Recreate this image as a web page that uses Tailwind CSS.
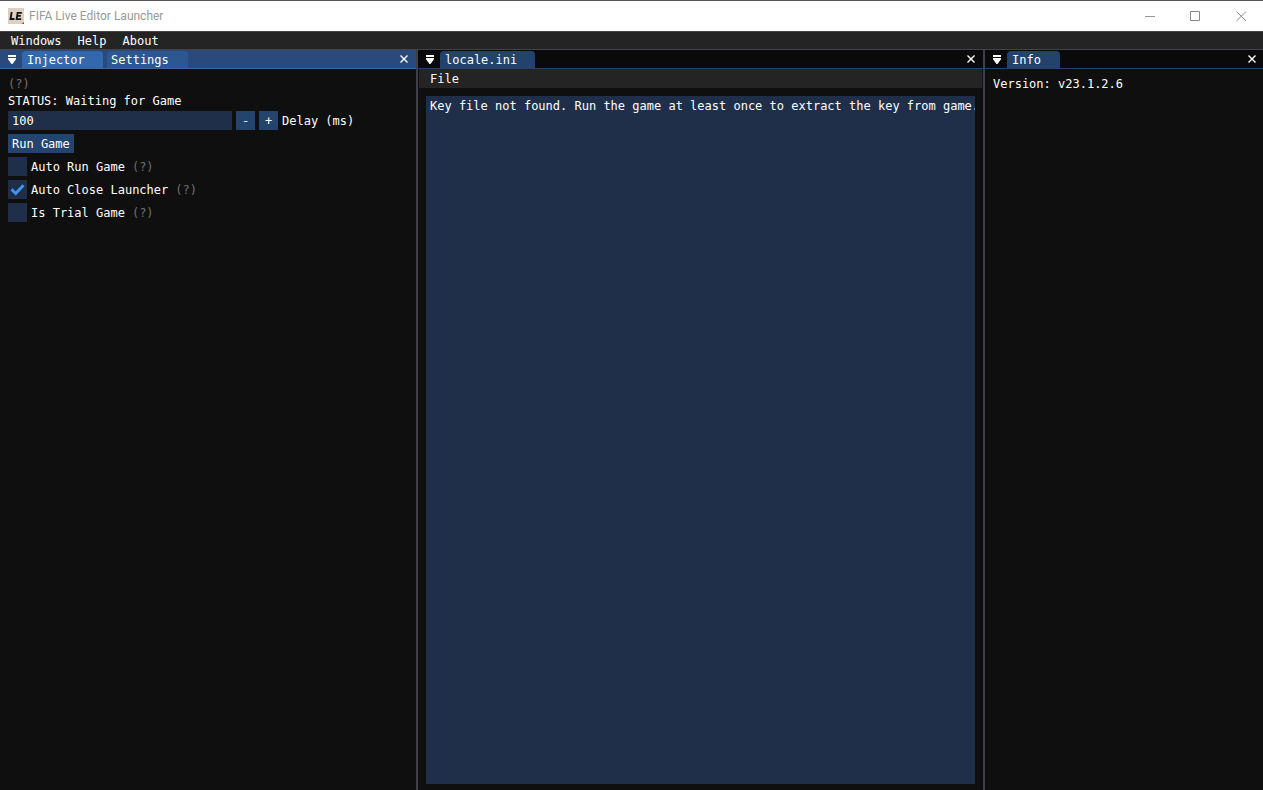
<!DOCTYPE html>
<html lang="en">
<head>
<meta charset="utf-8">
<meta name="viewport" content="width=device-width, initial-scale=1">
<title>FIFA Live Editor Launcher</title>
<script src="https://cdn.jsdelivr.net/npm/@tailwindcss/browser@4"></script>
</head>
<body class="h-screen flex flex-col overflow-hidden bg-[#0f0f0f] text-white font-['DejaVu_Sans_Mono',monospace] text-[12px] leading-[13px]">
  <header class="h-[31px] shrink-0 flex items-center bg-white border-t border-[#555] font-[Roboto,sans-serif] text-[#999]">
    <svg class="ml-2 w-4 h-4" viewBox="0 0 16 16" aria-hidden="true">
      <rect width="16" height="16" fill="#ddd0c0"/>
      <path d="M3.700 4 2.500 11H6.500M13.800 4.900H9.600L8.600 11.100h4.600M9 7.900h3.800" fill="none" stroke="#111" stroke-width="1.8"/>
      <path d="M13.500 16l2.500-2v2z" fill="#6b5b4b"/>
    </svg>
    <h1 class="ml-[5px] flex-1 leading-4">FIFA Live Editor Launcher</h1>
    <button class="w-[45px] h-full pl-0.5 flex items-center justify-center" aria-label="Minimize">
      <svg class="w-[11px] h-[11px]" viewBox="0 0 11 11" fill="none" stroke="#999"><path d="M0 5.5h10"/></svg>
    </button>
    <button class="w-[46px] h-full pl-px flex items-center justify-center" aria-label="Maximize">
      <svg class="w-[11px] h-[11px]" viewBox="0 0 11 11" fill="none" stroke="#888"><path d="M.5.5h9v9h-9z"/></svg>
    </button>
    <button class="w-[45px] h-full pl-0.5 flex items-center justify-center" aria-label="Close window">
      <svg class="w-[11px] h-[11px]" viewBox="0 0 11 11" fill="none" stroke="#888"><path d="M.5.5l9.500 9.500M10 .5l-9.500 9.500"/></svg>
    </button>
  </header>

  <nav class="h-[19px] shrink-0 flex items-center gap-4 pt-0.5 pl-[11px] bg-[#242424] border-y border-[#43434b]" aria-label="Main menu">
    <button>Windows</button>
    <button>Help</button>
    <button>About</button>
  </nav>

  <main class="flex-1 min-h-0 flex">
    <section class="w-[418px] shrink-0 flex flex-col border-r-2 border-[#3f3f48]" aria-label="Injector">
      <div class="h-[19px] shrink-0 flex items-end bg-[#294a7a] border-b border-[#3a659c]">
        <button class="w-[22px] h-[18px] pl-0.5 flex items-center justify-center" aria-label="Tab list">
          <svg class="w-2 h-[9px]" viewBox="0 0 8 9" fill="#fff"><path d="M0 0h8v2H0zM0 3h8v1.200L4.500 9h-1L0 4.200z"/></svg>
        </button>
        <div class="flex-1 flex gap-1">
          <button class="w-[81px] h-[17px] px-[5px] pt-0.5 rounded-t bg-[#3368ad] text-left">Injector</button>
          <button class="w-[81px] h-[17px] px-1 pt-0.5 rounded-t bg-[#2c5791] text-left">Settings</button>
        </div>
        <button class="w-6 h-[18px] flex items-center justify-center" aria-label="Close Injector">
          <svg class="w-2 h-2" viewBox="0 0 8 8" fill="none" stroke="#fff" stroke-width="1.4"><path d="M.5.5l7 7M7.500.5l-7 7"/></svg>
        </button>
      </div>
      <div class="px-2 pt-[7px] pb-px leading-[17px]">
        <p class="text-[#707070]">(?)</p>
        <p>STATUS: Waiting for Game</p>
      </div>
      <div class="px-2 flex flex-col items-start gap-1">
        <div class="flex items-center gap-1">
          <input id="delay" type="text" value="100" class="w-56 h-[19px] px-1 bg-[#1f2f49] outline-none">
          <button class="w-[19px] h-[19px] pt-0.5 bg-[#23456d]" aria-label="Decrease delay">-</button>
          <button class="w-[19px] h-[19px] pt-0.5 bg-[#23456d]" aria-label="Increase delay">+</button>
          <label for="delay" class="pt-0.5">Delay (ms)</label>
        </div>
        <button class="h-[19px] px-1 pt-0.5 bg-[#23456d]">Run Game</button>
        <div class="flex items-center gap-[7px]">
          <label class="flex items-center gap-1">
            <input type="checkbox" class="appearance-none w-[19px] h-[19px] bg-[#1f2f49]">
            <span class="pt-0.5">Auto Run Game</span>
          </label>
          <span class="pt-0.5 text-[#707070]">(?)</span>
        </div>
        <div class="flex items-center gap-[7px]">
          <label class="flex items-center gap-1">
            <span class="grid">
              <input type="checkbox" checked class="peer col-start-1 row-start-1 appearance-none w-[19px] h-[19px] bg-[#1f2f49]">
              <svg class="col-start-1 row-start-1 w-[19px] h-[19px] pointer-events-none invisible peer-checked:visible" viewBox="0 0 19 19" fill="none" stroke="#4296fa" stroke-width="2.8"><path d="M3.500 9.300l4.200 4.200 7.800-8.300"/></svg>
            </span>
            <span class="pt-0.5">Auto Close Launcher</span>
          </label>
          <span class="pt-0.5 text-[#707070]">(?)</span>
        </div>
        <div class="flex items-center gap-[7px]">
          <label class="flex items-center gap-1">
            <input type="checkbox" class="appearance-none w-[19px] h-[19px] bg-[#1f2f49]">
            <span class="pt-0.5">Is Trial Game</span>
          </label>
          <span class="pt-0.5 text-[#707070]">(?)</span>
        </div>
      </div>
    </section>

    <section class="flex-1 min-w-0 flex flex-col border-r-2 border-[#3f3f48]" aria-label="locale.ini">
      <div class="h-[19px] shrink-0 flex items-end bg-[#0a0a0a] border-b border-[#23436c]">
        <button class="w-[22px] h-[18px] pl-0.5 flex items-center justify-center" aria-label="Tab list">
          <svg class="w-2 h-[9px]" viewBox="0 0 8 9" fill="#fff"><path d="M0 0h8v2H0zM0 3h8v1.200L4.500 9h-1L0 4.200z"/></svg>
        </button>
        <div class="flex-1 flex">
          <button class="w-[95px] h-[17px] px-[5px] pt-0.5 rounded-t bg-[#23436c] text-left">locale.ini</button>
        </div>
        <button class="w-6 h-[18px] flex items-center justify-center" aria-label="Close locale.ini">
          <svg class="w-2 h-2" viewBox="0 0 8 8" fill="none" stroke="#fff" stroke-width="1.4"><path d="M.5.5l7 7M7.500.5l-7 7"/></svg>
        </button>
      </div>
      <div class="h-[19px] shrink-0 flex items-center mx-px px-[11px] pt-0.5 bg-[#242424]">
        <button>File</button>
      </div>
      <div class="flex-1 min-h-0 flex px-2 pt-2 pb-[6px]">
        <textarea readonly wrap="off" aria-label="locale.ini contents" class="flex-1 min-w-0 resize-none outline-none pl-1 pt-1 bg-[#1f2f49] overflow-hidden whitespace-pre">Key file not found. Run the game at least once to extract the key from game.</textarea>
      </div>
    </section>

    <section class="w-[278px] shrink-0 flex flex-col" aria-label="Info">
      <div class="h-[19px] shrink-0 flex items-end bg-[#0a0a0a] border-b border-[#23436c]">
        <button class="w-[22px] h-[18px] pl-0.5 flex items-center justify-center" aria-label="Tab list">
          <svg class="w-2 h-[9px]" viewBox="0 0 8 9" fill="#fff"><path d="M0 0h8v2H0zM0 3h8v1.200L4.500 9h-1L0 4.200z"/></svg>
        </button>
        <div class="flex-1 flex">
          <button class="w-[53px] h-[17px] px-[5px] pt-0.5 rounded-t bg-[#23436c] text-left">Info</button>
        </div>
        <button class="w-[22px] h-[18px] flex items-center justify-center" aria-label="Close Info">
          <svg class="w-2 h-2" viewBox="0 0 8 8" fill="none" stroke="#fff" stroke-width="1.4"><path d="M.5.5l7 7M7.500.5l-7 7"/></svg>
        </button>
      </div>
      <p class="px-2 pt-[7px] leading-[17px]">Version: v23.1.2.6</p>
    </section>
  </main>
</body>
</html>
